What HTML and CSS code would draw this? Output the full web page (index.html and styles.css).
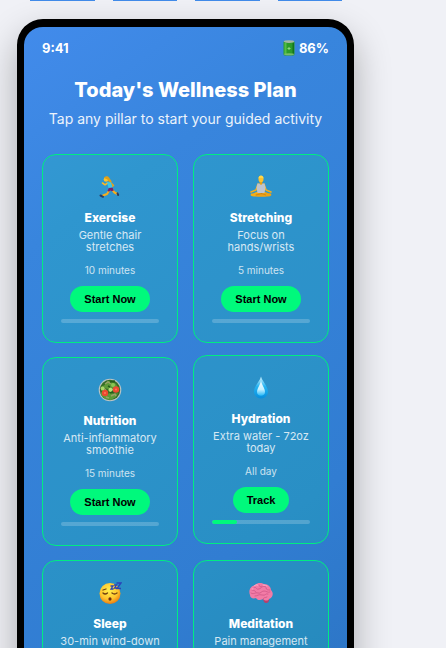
FILE: index.html
```html
<!DOCTYPE html>
<html lang="en">
<head>
<meta charset="utf-8">
<meta name="viewport" content="width=device-width, initial-scale=1">
<title>Today's Wellness Plan</title>
<link rel="stylesheet" href="styles.css">
</head>
<body>
<div class="tabs" aria-hidden="true"><span class="tab"></span><span class="tab"></span><span class="tab"></span><span class="tab"></span></div>
<main class="phone">
  <div class="status">
    <span>9:41</span>
    <span class="battery">
      <svg class="battery-icon" viewBox="0 0 12 16" aria-hidden="true">
        <rect x="0.5" y="1" width="11" height="14.5" rx="1.5" fill="#2b9b2b"/>
        <rect x="1.5" y="3" width="2" height="11" fill="#54bd45"/>
        <rect x="9.5" y="3" width="1.5" height="11" fill="#15741e"/>
        <ellipse cx="6" cy="1.6" rx="5.2" ry="1.3" fill="#a4b8a4"/>
        <ellipse cx="6" cy="14.3" rx="5" ry="1" fill="#79bd68"/>
        <path d="M6 7v3M4.500 8.500h3" stroke="#8fd582" stroke-width="1"/>
      </svg>
      86%
    </span>
  </div>
  <header class="intro">
    <h1>Today's Wellness Plan</h1>
    <p>Tap any pillar to start your guided activity</p>
  </header>
  <section class="grid">
    <article class="card">
      <svg class="icon" viewBox="0 0 24 24" aria-hidden="true">
        <path d="M12.500 7.500 15.500 10.500 13 12.500" fill="none" stroke="#e8a21a" stroke-width="1.600" stroke-linecap="round" stroke-linejoin="round"/>
        <path d="m11.500 15-2.500 4-4 1.500M14 14.500l2.500 3 3 1.500" fill="none" stroke="#f7ae1c" stroke-width="2" stroke-linecap="round" stroke-linejoin="round"/>
        <path d="M9.500 8 7 9.800 4.500 8" fill="none" stroke="#fbb823" stroke-width="1.600" stroke-linecap="round" stroke-linejoin="round"/>
        <path d="m9 7 4 .2 1.500 5.800-3.800.5Z" fill="#38c9ec"/>
        <path d="m10.800 13 3.700-.6 1.300 3-2 .8-1.300-.8-1.500 1.300-1.500-1Z" fill="#7a206c"/>
        <circle cx="8" cy="4.500" r="2.300" fill="#fdc42e"/>
        <path d="M6 3C7 .8 10 1 11 2.500c.8 1.500 2 2 2.800 4.500-2 .5-3.800-.3-4.300-2.500Z" fill="#e0a018"/>
        <path d="M2.500 20.500 5 21.800M19.500 18.300l.7 1.700" stroke="#2c3c60" stroke-width="2" stroke-linecap="round"/>
      </svg>
      <h2>Exercise</h2><p class="desc">Gentle chair stretches</p><p class="time">10 minutes</p>
      <button type="button">Start Now</button><div class="bar"></div>
    </article>
    <article class="card">
      <svg class="icon" viewBox="0 0 24 24" aria-hidden="true">
        <path d="M9 9 7 15l-5 2M15 9l2 6 5 2" fill="none" stroke="#f2ae1d" stroke-width="1.600" stroke-linecap="round" stroke-linejoin="round"/>
        <path d="M2 18.500c3 0 5-1.500 8-2.500l8 3.500c1 1 0 2-2 2H5c-3 0-4-1-3-3Z" fill="#f5ae18"/>
        <path d="M22 18.500c-3 0-5-1.500-8-2.500l-8 3.500c0 1 1 2 3 2h10c3 0 4-1 3-3Z" fill="#eda115"/>
        <path d="M8.500 8.500h7l1 4-1 5.500h-7l-1-5.500Z" fill="#bdc4d0"/>
        <path d="M10.700 6h2.600v3l-1.300 1-1.300-1Z" fill="#e6a016"/>
        <ellipse cx="12" cy="4" rx="2.500" ry="3.300" fill="#fbc12c"/>
        <path d="M9.500 3.500c0-4 5-4 5 0-2-1-3-1-5 0Z" fill="#ffd84a"/>
        <path d="m7 20 6-1.500M17 20l-5-1.500" stroke="#c98315" stroke-width=".8"/>
      </svg>
      <h2>Stretching</h2><p class="desc">Focus on hands/wrists</p><p class="time">5 minutes</p>
      <button type="button">Start Now</button><div class="bar"></div>
    </article>
    <article class="card">
      <svg class="icon" viewBox="0 0 24 24" aria-hidden="true">
        <circle cx="12" cy="12" r="11.300" fill="#b9c3c4"/>
        <circle cx="12" cy="12" r="10.200" fill="#356d24"/>
        <path d="M3 9c2-2 4-1 5-4s4-2 5-1 5 0 6 4l2 4-3 1-4-3-4 1-4-1-3 3ZM3 14l4 3 5-2 5 1 3-1-2 4-5 3-6-1-4-4Z" fill="#5c9a37"/>
        <path d="m7 6 3-2 3 2M13 18l4-2 1 2M5 10l3 2M14 11l3 2M8 19l3 1" stroke="#96a066" stroke-width="1.500" fill="none"/>
        <circle cx="7" cy="15" r="3.200" fill="#ed4930"/><circle cx="18" cy="11.500" r="3.200" fill="#ed4930"/>
        <circle cx="7" cy="15" r="1.100" fill="#ff7656"/><circle cx="18" cy="11.500" r="1.100" fill="#ff7656"/>
        <circle cx="12.500" cy="11.800" r="2.100" fill="#b5df77"/><circle cx="4.600" cy="10.500" r="1.900" fill="#a9d768"/><circle cx="15" cy="7" r="2" fill="#8bc653"/>
        <path d="m12 4 5-1M10 8l2 1M12 15l3-1" stroke="#235d1b" stroke-width="1.500"/>
      </svg>
      <h2>Nutrition</h2><p class="desc">Anti-inflammatory smoothie</p><p class="time">15 minutes</p>
      <button type="button">Start Now</button><div class="bar"></div>
    </article>
    <article class="card raised">
      <svg class="icon" viewBox="0 0 24 24" aria-hidden="true">
        <defs><linearGradient id="drop" x1="0" y1="0" x2="0" y2="1"><stop stop-color="#d5f5ff"/><stop offset=".45" stop-color="#25b4f3"/><stop offset="1" stop-color="#078edc"/></linearGradient><linearGradient id="shine" x1="0" y1="0" x2="0" y2="1"><stop stop-color="#fff"/><stop offset=".6" stop-color="#c5f0ff"/><stop offset="1" stop-color="#25b8f8"/></linearGradient></defs>
        <path d="M12 .5c1 4.500 7 9.500 7 15.500a7 6.500 0 0 1-14 0C5 10 11 5 12 .5Z" fill="url(#drop)"/>
        <path d="M12 4c0 4 4 8 4 12 0 5-8 5-8 0 0-4 4-8 4-12Z" fill="url(#shine)"/>
      </svg>
      <h2>Hydration</h2><p class="desc">Extra water - 72oz today</p><p class="time">All day</p>
      <button type="button">Track</button><div class="bar"><span class="fill"></span></div>
    </article>
    <article class="card">
      <svg class="icon" viewBox="0 0 24 24" aria-hidden="true">
        <defs><radialGradient id="face" cx=".45" cy=".35" r=".65"><stop stop-color="#fff04c"/><stop offset=".65" stop-color="#fec52e"/><stop offset="1" stop-color="#ed7e10"/></radialGradient></defs>
        <circle cx="12" cy="12.500" r="10.500" fill="url(#face)"/>
        <path d="M5 12q2 2 4.500 0M14 12q2.500 2 5 0M5 9l3-1" fill="none" stroke="#714112" stroke-width="1.300" stroke-linecap="round"/>
        <ellipse cx="12" cy="18" rx="1.600" ry="1.800" fill="#713111"/>
        <path d="M12.500 5h2.500l-2 3h2.500M16 4h2.500l-2 3h2.500M18.500 2H23l-4 5.500h4" fill="none" stroke="#2b43b8" stroke-width="1.300"/>
      </svg>
      <h2>Sleep</h2><p class="desc lines">30-min wind-down<br>routine</p>
    </article>
    <article class="card">
      <svg class="icon" viewBox="0 0 24 24" aria-hidden="true">
        <path d="M14 18c4 0 6-2 6 1s-3 4-5 2Z" fill="#b93f6b"/>
        <path d="M1 14C-1 9 2 5 6 4c3-3 7-2 9-1 4 0 7 3 7 6 3 3 2 8-2 9-1 2-4 2-6 0-3 2-6 1-7-1-3 1-6 0-6-3Z" fill="#f27ba6"/>
        <path d="M2 12c3 2 4-1 7 0s3-2 6-2 3 2 6 1M5 6c3 0 2 3 5 2s3-4 7-2M6 15c3 0 3-2 7-1s3-2 6-1M10 4c0 2 2 2 3 1M17 7c0 2 2 2 4 2M14 18c1-2 2-1 4-2M3 9c2 0 3 1 4 2" fill="none" stroke="#ce5685" stroke-width=".8" stroke-linecap="round"/>
        <path d="M5 5q2-2 4-1M14 4q3 0 4 1M3 8h1" fill="none" stroke="#ffadc7" stroke-width="1" stroke-linecap="round"/>
      </svg>
      <h2>Meditation</h2><p class="desc">Pain management</p>
    </article>
  </section>
</main>
</body>
</html>
```
FILE: styles.css
```css
* { box-sizing: border-box; }
body { margin: 0; height: 100vh; overflow: hidden; background: #f0f1f6; font-family: Inter, "Liberation Sans", sans-serif; color: #fff; }
h1, h2, p { margin: 0; }
.tabs { display: grid; grid-template-columns: repeat(4, 1fr); gap: 18px; margin: 0 104px 18px 30px; }
.tab { height: 1px; background: #408ae8; }
.phone { margin: 0 92px 0 17px; padding: 12px 18px 18px; border: solid #000; border-width: 8px 7px; border-radius: 26px; background: linear-gradient(145deg, #428beb, #3885dd 25%, #317dd2 75%, #2c75c5); box-shadow: 0 16px 36px rgba(0, 0, 0, 0.3); }
.status { display: flex; justify-content: space-between; align-items: center; height: 18px; font-size: 13px; font-weight: 700; }
.battery { display: flex; align-items: center; gap: 4px; }
.battery-icon { width: 12px; height: 16px; }
.intro { margin: 20px 0 25px; text-align: center; }
.intro h1 { font-size: 20px; line-height: 26px; font-weight: 800; white-space: nowrap; }
.intro p { margin-top: 6px; font-size: 14px; line-height: 20px; opacity: 0.9; white-space: nowrap; }
.grid { display: grid; grid-template-columns: 1fr 1fr; gap: 14px 15px; }
.card { display: flex; flex-direction: column; align-items: center; min-width: 0; padding: 18px; border: 1px solid #00ec82; border-radius: 14px; background: rgba(0, 250, 125, 0.15); text-align: center; }
.raised { position: relative; top: -2px; }
.icon { width: 24px; height: 24px; margin: 2px 0 11px; }
.card h2 { font-size: 12px; line-height: 16px; font-weight: 800; }
.desc { margin-top: 3px; font-size: 11px; line-height: 12px; opacity: 0.8; }
.lines { white-space: nowrap; }
.time { margin-top: 11px; font-size: 10px; line-height: 12px; opacity: 0.75; }
.card button { margin: 10px 0 7px; padding: 0 14px; height: 26px; border: 0; border-radius: 13px; background: #00f97c; color: #000; font: 700 11px "Liberation Sans", sans-serif; white-space: nowrap; }
.bar { width: 100%; height: 4px; margin-bottom: 1px; border-radius: 2px; overflow: hidden; background: rgba(255, 255, 255, 0.2); }
.fill { display: block; width: 25%; height: 100%; border-radius: 2px; background: #00f97c; }
```
